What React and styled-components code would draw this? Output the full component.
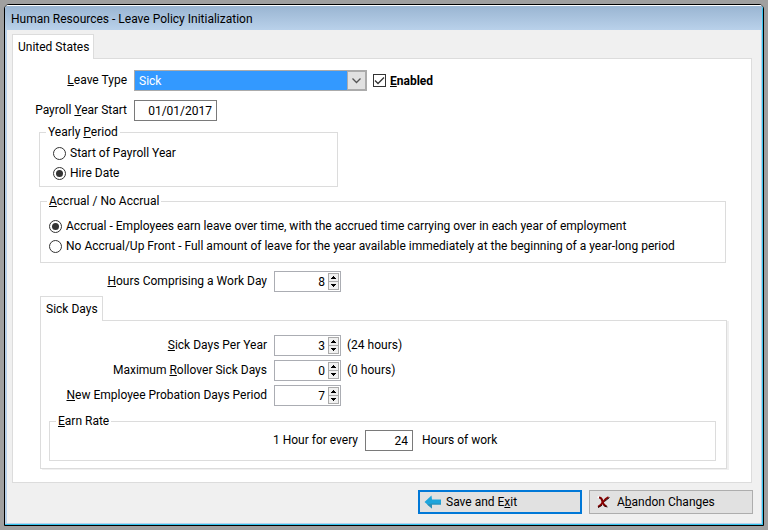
import { useState } from 'react';
import styled, { createGlobalStyle } from 'styled-components';

const GlobalStyle = createGlobalStyle`
    * {
        box-sizing: border-box;
    }

    body {
        margin: 0;
        background: #a0a0a0;
    }

    body, button, input, select {
        font-family: Roboto, "Open Sans", sans-serif;
        font-size: 12px;
        line-height: 16px;
        color: #000;
    }

    u {
        text-underline-offset: 1px;
        text-decoration-thickness: 1px;
        text-decoration-skip-ink: none;
    }
`

const Desktop = styled.div`
    display: flex;
    min-height: 100vh;
    padding: 4px;
`

const Window = styled.div`
    flex: 1;
    display: flex;
    flex-direction: column;
    border: 1px solid #000;
    border-radius: 5px 5px 0 0;
    background: #fff;
    overflow: hidden;
`

const Frame = styled.div`
    flex: 1;
    display: flex;
    flex-direction: column;
    border: solid;
    border-width: 1px 1px 1px 0;
    border-color: #fff #33c4ee #33c4ee #fff;
    background: #f0f0f0;
`

const TitleBar = styled.header`
    height: 24px;
    padding: 5px 6px;
    background: linear-gradient(#9ab5d2, #b9d1ea);
    white-space: nowrap;
`

const Title = styled.h1`
    margin: 0;
    font-size: 12px;
    font-weight: 400;
`

const Body = styled.main`
    flex: 1;
    display: flex;
    flex-direction: column;
    padding: 4px 9px 9px 5px;
    border: 1px solid #b9d1ea;
    border-top: none;
    border-left-width: 2px;
`

const Tab = styled.button`
    position: relative;
    z-index: 1;
    align-self: flex-start;
    height: 25px;
    margin: 0 0 -1px;
    padding: 0 4px 0 5px;
    border: 1px solid #dcdcdc;
    border-bottom: none;
    background: #fff;
`

const Panel = styled.section`
    flex: 1;
    display: flex;
    flex-direction: column;
    padding: 11px 25px 13px 16px;
    border: 1px solid #dcdcdc;
    background: #fff;
`

const SubPanel = styled.section`
    display: flex;
    flex-direction: column;
    gap: 4px;
    margin: 0 -1px 0 11px;
    padding: 14px 10px 7px 8px;
    border: 1px solid #dcdcdc;
    box-shadow: 2px 1px 0 #f0f0f0;
`

const SubTab = styled(Tab)`
    margin: 4px 0 -1px 11px;
`

const Row = styled.div`
    display: flex;
    align-items: center;
    margin-top: ${props => props.$top || 0}px;
`

const Label = styled.label`
    width: ${props => props.$width}px;
    padding: 0 7px 2px 0;
    text-align: right;
    white-space: nowrap;
`

const Hint = styled.span`
    padding: 0 0 2px ${props => props.$gap || 6}px;
`

const TextInput = styled.input`
    width: ${props => props.$width}px;
    height: 21px;
    padding: 1px 4px 0;
    border: 1px solid #7a7a7a;
    background: #fff;
    text-align: right;
`

const SelectBox = styled.div`
    display: grid;
    grid-template-columns: 1fr 19px;
    width: 233px;
    height: 21px;
    border: 1px solid #ababab;
`

const Select = styled.select`
    grid-area: 1 / 1 / 2 / 3;
    appearance: none;
    padding: 1px 4px 0;
    border: none;
    border-radius: 0;
    background: #3399ff;
    color: #fff;
`

const SelectArrow = styled.span`
    grid-area: 1 / 2 / 2 / 3;
    display: flex;
    align-items: center;
    justify-content: center;
    border: 1px solid #ababab;
    background: #e1e1e1;
    pointer-events: none;
`

const CheckLabel = styled.label`
    display: flex;
    align-items: center;
    gap: 4px;
    margin-left: 6px;
    font-weight: 700;
`

const CheckBox = styled.span`
    display: grid;
    width: 13px;
    height: 13px;

    > input, > svg {
        grid-area: 1 / 1;
    }

    > input {
        appearance: none;
        margin: 0;
        border: 1px solid #333;
        background: #fff;
    }

    > svg {
        pointer-events: none;
    }

    > input:not(:checked) + svg {
        visibility: hidden;
    }
`

const Group = styled.fieldset`
    min-width: 0;
    margin: 0;
    border: 1px solid #dcdcdc;
    padding: 0 6px;

    > legend {
        height: 16px;
        padding: 0 2px;
    }
`

const YearlyGroup = styled(Group)`
    width: 299px;
    margin: 3px 0 0 10px;
    padding: 3px 6px;
`

const AccrualGroup = styled(Group)`
    margin: 6px 0 0 11px;
    padding: 7px 6px 6px;
`

const EarnGroup = styled(Group)`
    margin-top: 3px;
    padding: 1px 6px 9px;
`

const RadioLabel = styled.label`
    display: flex;
    align-items: center;
    gap: 4px;
    height: 20px;
    padding-left: ${props => props.$indent}px;
    white-space: nowrap;

    > input {
        appearance: none;
        display: grid;
        place-items: center;
        flex: none;
        width: 13px;
        height: 13px;
        margin: 0;
        border: 1px solid #333;
        border-radius: 50%;
        background: #fff;
    }

    > input:checked::before {
        content: '';
        width: 7px;
        height: 7px;
        border-radius: 50%;
        background: #333;
    }
`

const SpinBox = styled.div`
    display: flex;
    width: 67px;
    height: 21px;
    padding: 1px;
    border: 1px solid #abadb3;
    background: #fff;

    > input {
        flex: 1;
        min-width: 0;
        padding: 1px 3px 0 0;
        border: none;
        outline: none;
        text-align: right;
    }
`

const SpinButtons = styled.div`
    display: flex;
    flex-direction: column;
    width: 11px;
`

const SpinButton = styled.button`
    display: flex;
    align-items: center;
    justify-content: center;
    flex: 1;
    min-height: 0;
    padding: 0;
    border: 1px solid #ababab;
    background: #f0f0f0;

    & + & {
        border-top: none;
    }
`

const Footer = styled.footer`
    display: flex;
    justify-content: flex-end;
    gap: 7px;
    margin: 7px -1px 0 0;
`

const Button = styled.button`
    display: flex;
    align-items: center;
    gap: ${props => props.$primary ? '4px' : '7px'};
    width: 164px;
    height: 24px;
    padding: 0 ${props => props.$primary ? '4px' : '7px'};
    border: ${props => props.$primary ? '2px solid #0078d7' : '1px solid #adadad'};
    background: #e1e1e1;
    white-space: nowrap;
`

const ArrowIcon = () => (
    <svg width="18" height="14" viewBox="0 0 18 14">
        <path d="M0.500 7 L7.500 0.500 L8 4.500 H17 V9.500 H8 V13.500 Z" fill="#1ea5dc" />
        <path d="M3 9.500 L8 13.500 V9.500 H17 V8.500 H8" fill="#2b8fb8" />
    </svg>
);

const CrossIcon = () => (
    <svg width="13" height="12" viewBox="0 0 13 12">
        <path d="M0 1 L2 0 L4 1 L3 2 L1 2 Z" fill="#fff" />
        <path d="M2 1.500 Q4.500 1.500 5.200 4.500 Q6.200 9.500 9.500 10.300" fill="none" stroke="#7d0000" strokeWidth="2.200" />
        <path d="M11.500 1.200 Q8.500 2.500 6 6 Q4 9.500 1 10.800" fill="none" stroke="#8b0000" strokeWidth="1.900" />
        <path d="M12.500 1.500 L7.500 5.500 M5 9.300 L1 11.500 M7.500 10 L10.500 11" fill="none" stroke="#1c0000" strokeWidth="0.900" />
    </svg>
);

const Spinner = ({ id, value, onChange }) => (
    <SpinBox>
        <input id={id} type="text" inputMode="numeric" value={value} onChange={e => onChange(Number(e.target.value) || 0)} />
        <SpinButtons>
            <SpinButton type="button" aria-label="Increase" onClick={() => onChange(value + 1)}>
                <svg width="5" height="3" viewBox="0 0 5 3"><path d="M2 0h1v1h1v1h1v1H0V2h1V1h1z" /></svg>
            </SpinButton>
            <SpinButton type="button" aria-label="Decrease" onClick={() => onChange(Math.max(0, value - 1))}>
                <svg width="5" height="3" viewBox="0 0 5 3"><path d="M0 0h5v1H4v1H3v1H2V2H1V1H0z" /></svg>
            </SpinButton>
        </SpinButtons>
    </SpinBox>
);

const App = () => {
    const [ leaveType, setLeaveType ] = useState('Sick');
    const [ enabled, setEnabled ] = useState(true);
    const [ yearStart, setYearStart ] = useState('01/01/2017');
    const [ period, setPeriod ] = useState('hire');
    const [ accrual, setAccrual ] = useState('accrual');
    const [ workDay, setWorkDay ] = useState(8);
    const [ sickDays, setSickDays ] = useState(3);
    const [ rollover, setRollover ] = useState(0);
    const [ probation, setProbation ] = useState(7);
    const [ earnRate, setEarnRate ] = useState('24');

    return (
        <Desktop>
            <GlobalStyle />
            <Window>
                <Frame>
                    <TitleBar>
                        <Title>Human Resources - Leave Policy Initialization</Title>
                    </TitleBar>
                    <Body>
                        <Tab type="button">United States</Tab>
                        <Panel>
                            <Row>
                                <Label htmlFor="leave-type" $width={105}><u>L</u>eave Type</Label>
                                <SelectBox>
                                    <Select id="leave-type" value={leaveType} onChange={e => setLeaveType(e.target.value)}>
                                        <option>Sick</option>
                                        <option>Vacation</option>
                                    </Select>
                                    <SelectArrow>
                                        <svg width="9" height="6" viewBox="0 0 9 6"><path d="M0.500 0.500 L4.500 4.500 L8.500 0.500" fill="none" stroke="#555" strokeWidth="1.300" /></svg>
                                    </SelectArrow>
                                </SelectBox>
                                <CheckLabel>
                                    <CheckBox>
                                        <input type="checkbox" checked={enabled} onChange={e => setEnabled(e.target.checked)} />
                                        <svg width="13" height="13" viewBox="0 0 13 13"><path d="M2 6.500 L5 9.500 L11 3.500" fill="none" stroke="#333" strokeWidth="1.300" /></svg>
                                    </CheckBox>
                                    <span><u>E</u>nabled</span>
                                </CheckLabel>
                            </Row>
                            <Row $top={9}>
                                <Label htmlFor="year-start" $width={105}>Payroll <u>Y</u>ear Start</Label>
                                <TextInput id="year-start" $width={83} value={yearStart} onChange={e => setYearStart(e.target.value)} />
                            </Row>
                            <YearlyGroup>
                                <legend>Yearly <u>P</u>eriod</legend>
                                <RadioLabel $indent={7}>
                                    <input type="radio" name="period" checked={period === 'payroll'} onChange={() => setPeriod('payroll')} />
                                    Start of Payroll Year
                                </RadioLabel>
                                <RadioLabel $indent={7}>
                                    <input type="radio" name="period" checked={period === 'hire'} onChange={() => setPeriod('hire')} />
                                    Hire Date
                                </RadioLabel>
                            </YearlyGroup>
                            <AccrualGroup>
                                <legend><u>A</u>ccrual / No Accrual</legend>
                                <RadioLabel $indent={2}>
                                    <input type="radio" name="accrual" checked={accrual === 'accrual'} onChange={() => setAccrual('accrual')} />
                                    Accrual - Employees earn leave over time, with the accrued time carrying over in each year of employment
                                </RadioLabel>
                                <RadioLabel $indent={2}>
                                    <input type="radio" name="accrual" checked={accrual === 'none'} onChange={() => setAccrual('none')} />
                                    No Accrual/Up Front - Full amount of leave for the year available immediately at the beginning of a year-long period
                                </RadioLabel>
                            </AccrualGroup>
                            <Row $top={8}>
                                <Label htmlFor="work-day" $width={245}><u>H</u>ours Comprising a Work Day</Label>
                                <Spinner id="work-day" value={workDay} onChange={setWorkDay} />
                            </Row>
                            <SubTab type="button">Sick Days</SubTab>
                            <SubPanel>
                                <Row>
                                    <Label htmlFor="sick-days" $width={225}><u>S</u>ick Days Per Year</Label>
                                    <Spinner id="sick-days" value={sickDays} onChange={setSickDays} />
                                    <Hint>({sickDays * workDay} hours)</Hint>
                                </Row>
                                <Row>
                                    <Label htmlFor="rollover" $width={225}>Maximum <u>R</u>ollover Sick Days</Label>
                                    <Spinner id="rollover" value={rollover} onChange={setRollover} />
                                    <Hint>({rollover * workDay} hours)</Hint>
                                </Row>
                                <Row>
                                    <Label htmlFor="probation" $width={225}><u>N</u>ew Employee Probation Days Period</Label>
                                    <Spinner id="probation" value={probation} onChange={setProbation} />
                                </Row>
                                <EarnGroup>
                                    <legend><u>E</u>arn Rate</legend>
                                    <Row>
                                        <Label htmlFor="earn-rate" $width={309}>1 Hour for every</Label>
                                        <TextInput id="earn-rate" $width={48} value={earnRate} onChange={e => setEarnRate(e.target.value)} />
                                        <Hint $gap={9}>Hours of work</Hint>
                                    </Row>
                                </EarnGroup>
                            </SubPanel>
                        </Panel>
                        <Footer>
                            <Button type="submit" $primary>
                                <ArrowIcon />
                                <span>Save and E<u>x</u>it</span>
                            </Button>
                            <Button type="button">
                                <CrossIcon />
                                <span>A<u>b</u>andon Changes</span>
                            </Button>
                        </Footer>
                    </Body>
                </Frame>
            </Window>
        </Desktop>
    );
};

export default App;
